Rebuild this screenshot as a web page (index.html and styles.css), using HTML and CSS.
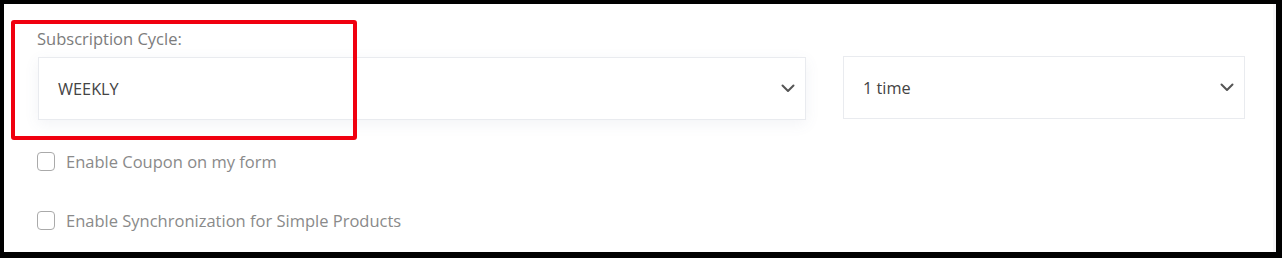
FILE: index.html
```html
<!DOCTYPE html>
<html>
<head>
<meta charset="utf-8">
<link rel="stylesheet" href="styles.css">
</head>
<body>
<div class="frame">
  <div class="panel">
    <div class="field">
      <label class="label">Subscription Cycle:</label>
      <div class="row">
        <div class="select select-main">
          <span class="value upper">WEEKLY</span>
          <svg class="chev" width="14" height="9" viewBox="0 0 14 9"><path d="M1.5 1.5 L7 7 L12.5 1.5" fill="none" stroke="#555" stroke-width="2" stroke-linecap="round" stroke-linejoin="round"/></svg>
        </div>
        <div class="select select-side">
          <span class="value">1 time</span>
          <svg class="chev" width="14" height="9" viewBox="0 0 14 9"><path d="M1.5 1.5 L7 7 L12.5 1.5" fill="none" stroke="#555" stroke-width="2" stroke-linecap="round" stroke-linejoin="round"/></svg>
        </div>
      </div>
    </div>
    <div class="check first"><span class="box"></span><span class="ctext">Enable Coupon on my form</span></div>
    <div class="check second"><span class="box"></span><span class="ctext">Enable Synchronization for Simple Products</span></div>
    <div class="highlight"></div>
  </div>
</div>
</body>
</html>
```
FILE: styles.css
```css
html, body { margin: 0; padding: 0; }
body {
  background: #000;
  width: 1282px;
  height: 258px;
  overflow: hidden;
  font-family: "Open Sans", "Noto Sans", "Liberation Sans", sans-serif;
}
.frame {
  padding: 4px 6px 6px 4px;
  height: 248px;
}
.panel {
  position: relative;
  background: #fff;
  height: 248px;
  border-right: 3px solid #f6f6f8;
  box-sizing: border-box;
  padding: 24px 0 0 33px;
}
.label {
  display: block;
  font-size: 16.5px;
  color: #7c7c7c;
  line-height: 22px;
  height: 29px;
}
.row {
  display: flex;
  gap: 37px;
}
.select {
  box-sizing: border-box;
  height: 63px;
  border: 1px solid #e9ebef;
  background: #fff;
  display: flex;
  align-items: center;
  justify-content: space-between;
  padding: 0 10px 0 19px;
}
.select-main {
  width: 768px;
  margin-left: 1px;
  box-shadow: 0 4px 14px rgba(90, 100, 140, 0.08);
}
.select-side {
  width: 402px;
  margin-top: -1px;
}
.value {
  font-size: 16.3px;
  color: #444;
}
.chev { display: block; }
.check {
  display: flex;
  align-items: center;
  height: 30px;
}
.check.first { margin-top: 26px; }
.check.second { margin-top: 29px; }
.box {
  width: 18px;
  height: 19px;
  border: 1.5px solid #aaa;
  border-radius: 4px;
  box-sizing: border-box;
  margin-right: 11px;
}
.ctext {
  font-size: 16.5px;
  color: #8a8a8a;
}
.highlight {
  position: absolute;
  left: 7px;
  top: 16px;
  width: 346px;
  height: 120px;
  box-sizing: border-box;
  border: 4px solid #f0000f;
  border-radius: 3px;
}
```
